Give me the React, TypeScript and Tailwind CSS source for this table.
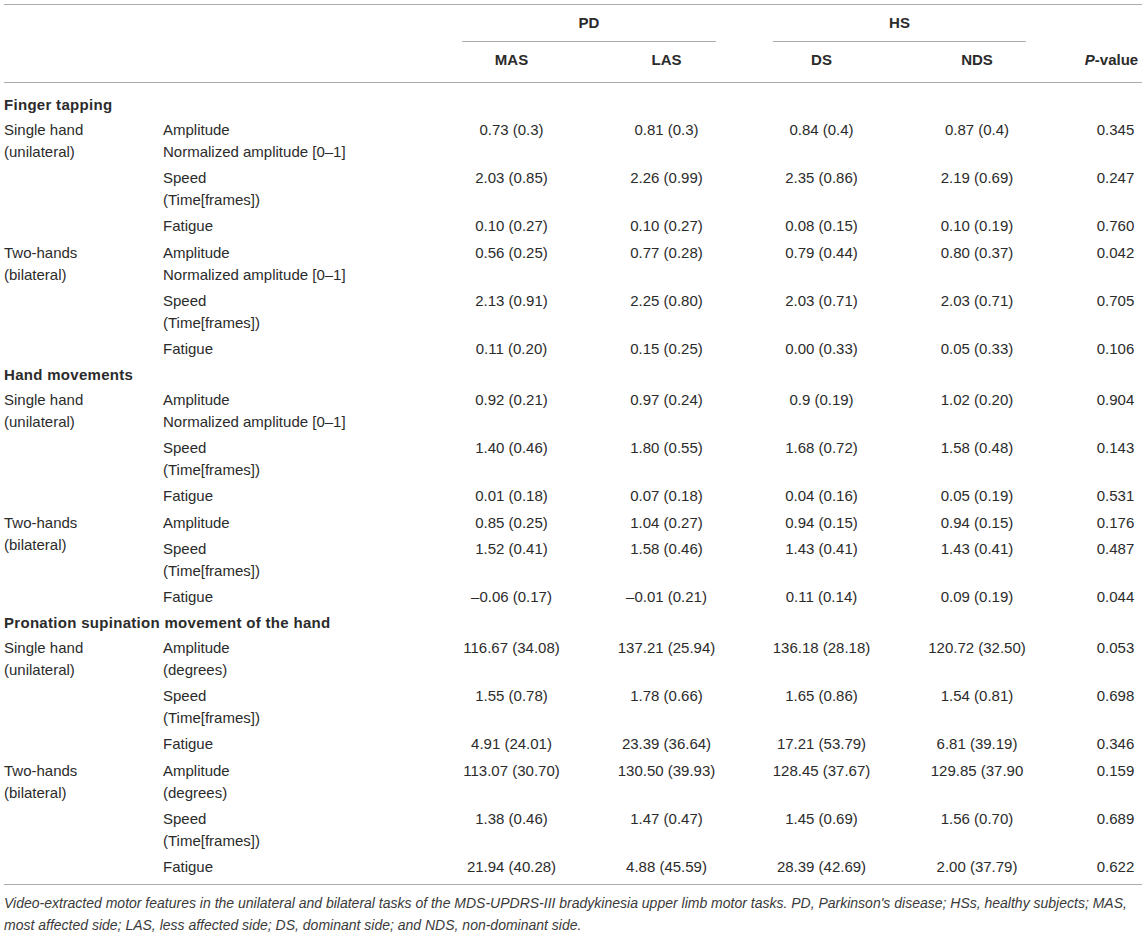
const font = { fontFamily: '"Liberation Sans", Arial, sans-serif' };

type Measure = { label: string[]; vals: string[]; p: string };
type Group = { name: string[]; rows: Measure[] };
type Section = { title: string; groups: Group[] };

const speed = ["Speed", "(Time[frames])"];

const sections: Section[] = [
  {
    title: "Finger tapping",
    groups: [
      {
        name: ["Single hand", "(unilateral)"],
        rows: [
          { label: ["Amplitude", "Normalized amplitude [0\u20131]"], vals: ["0.73 (0.3)", "0.81 (0.3)", "0.84 (0.4)", "0.87 (0.4)"], p: "0.345" },
          { label: speed, vals: ["2.03 (0.85)", "2.26 (0.99)", "2.35 (0.86)", "2.19 (0.69)"], p: "0.247" },
          { label: ["Fatigue"], vals: ["0.10 (0.27)", "0.10 (0.27)", "0.08 (0.15)", "0.10 (0.19)"], p: "0.760" },
        ],
      },
      {
        name: ["Two-hands", "(bilateral)"],
        rows: [
          { label: ["Amplitude", "Normalized amplitude [0\u20131]"], vals: ["0.56 (0.25)", "0.77 (0.28)", "0.79 (0.44)", "0.80 (0.37)"], p: "0.042" },
          { label: speed, vals: ["2.13 (0.91)", "2.25 (0.80)", "2.03 (0.71)", "2.03 (0.71)"], p: "0.705" },
          { label: ["Fatigue"], vals: ["0.11 (0.20)", "0.15 (0.25)", "0.00 (0.33)", "0.05 (0.33)"], p: "0.106" },
        ],
      },
    ],
  },
  {
    title: "Hand movements",
    groups: [
      {
        name: ["Single hand", "(unilateral)"],
        rows: [
          { label: ["Amplitude", "Normalized amplitude [0\u20131]"], vals: ["0.92 (0.21)", "0.97 (0.24)", "0.9 (0.19)", "1.02 (0.20)"], p: "0.904" },
          { label: speed, vals: ["1.40 (0.46)", "1.80 (0.55)", "1.68 (0.72)", "1.58 (0.48)"], p: "0.143" },
          { label: ["Fatigue"], vals: ["0.01 (0.18)", "0.07 (0.18)", "0.04 (0.16)", "0.05 (0.19)"], p: "0.531" },
        ],
      },
      {
        name: ["Two-hands", "(bilateral)"],
        rows: [
          { label: ["Amplitude"], vals: ["0.85 (0.25)", "1.04 (0.27)", "0.94 (0.15)", "0.94 (0.15)"], p: "0.176" },
          { label: speed, vals: ["1.52 (0.41)", "1.58 (0.46)", "1.43 (0.41)", "1.43 (0.41)"], p: "0.487" },
          { label: ["Fatigue"], vals: ["\u20130.06 (0.17)", "\u20130.01 (0.21)", "0.11 (0.14)", "0.09 (0.19)"], p: "0.044" },
        ],
      },
    ],
  },
  {
    title: "Pronation supination movement of the hand",
    groups: [
      {
        name: ["Single hand", "(unilateral)"],
        rows: [
          { label: ["Amplitude", "(degrees)"], vals: ["116.67 (34.08)", "137.21 (25.94)", "136.18 (28.18)", "120.72 (32.50)"], p: "0.053" },
          { label: speed, vals: ["1.55 (0.78)", "1.78 (0.66)", "1.65 (0.86)", "1.54 (0.81)"], p: "0.698" },
          { label: ["Fatigue"], vals: ["4.91 (24.01)", "23.39 (36.64)", "17.21 (53.79)", "6.81 (39.19)"], p: "0.346" },
        ],
      },
      {
        name: ["Two-hands", "(bilateral)"],
        rows: [
          { label: ["Amplitude", "(degrees)"], vals: ["113.07 (30.70)", "130.50 (39.93)", "128.45 (37.67)", "129.85 (37.90"], p: "0.159" },
          { label: speed, vals: ["1.38 (0.46)", "1.47 (0.47)", "1.45 (0.69)", "1.56 (0.70)"], p: "0.689" },
          { label: ["Fatigue"], vals: ["21.94 (40.28)", "4.88 (45.59)", "28.39 (42.69)", "2.00 (37.79)"], p: "0.622" },
        ],
      },
    ],
  },
];

const cols = "grid grid-cols-[159px_271px_155px_155px_155px_156px_87px]";

function GroupBlock({ g }: { g: Group }) {
  return (
    <div className={`${cols} pt-[1px]`}>
      <div className="row-span-3 py-[2px]">
        {g.name.map((n) => (
          <div key={n}>{n}</div>
        ))}
      </div>
      {g.rows.map((r, i) => (
        <div key={i} className="col-span-6 grid grid-cols-subgrid">
          <div className="py-[2px]">
            {r.label.map((l) => (
              <div key={l}>{l}</div>
            ))}
          </div>
          {r.vals.map((v, j) => (
            <div key={j} className="py-[2px] text-center">{v}</div>
          ))}
          <div className="py-[2px] pl-[34px] text-center">{r.p}</div>
        </div>
      ))}
    </div>
  );
}

export default function App() {
  return (
    <div className="bg-white min-h-screen px-[4px] pt-[4px] text-[#2b2b2b]" style={font}>
      <div className="w-[1138px] text-[15px] leading-[22px]">
        <div className="border-t border-b border-[#ababab]">
          <div className={`${cols} font-bold`}>
            <div className="col-span-2" />
            <div className="col-span-2 mx-[28px] pt-[7px] pb-[7px] border-b border-[#ababab] text-center">PD</div>
            <div className="col-span-2 mx-[29px] pt-[7px] pb-[7px] border-b border-[#ababab] text-center">HS</div>
            <div />
          </div>
          <div className={`${cols} font-bold pt-[7px] pb-[11px]`}>
            <div className="col-span-2" />
            <div className="text-center">MAS</div>
            <div className="text-center">LAS</div>
            <div className="text-center">DS</div>
            <div className="text-center">NDS</div>
            <div className="pl-[26px] text-center">
              <span className="italic">P</span>-value
            </div>
          </div>
        </div>
        <div className="pt-[9px] pb-[4px] border-b border-[#ababab]">
          {sections.map((s) => (
            <div key={s.title}>
              <div className="pt-[2px] font-bold tracking-[0.3px]">{s.title}</div>
              {s.groups.map((g, i) => (
                <GroupBlock key={i} g={g} />
              ))}
            </div>
          ))}
        </div>
        <p className="mt-[7px] italic text-[14px] leading-[22px] text-[#3a3a3a]">
          Video-extracted motor features in the unilateral and bilateral tasks of the MDS-UPDRS-III bradykinesia upper limb motor tasks. PD, Parkinson's disease; HSs, healthy subjects; MAS, most affected side; LAS, less affected side; DS, dominant side; and NDS, non-dominant side.
        </p>
      </div>
    </div>
  );
}
